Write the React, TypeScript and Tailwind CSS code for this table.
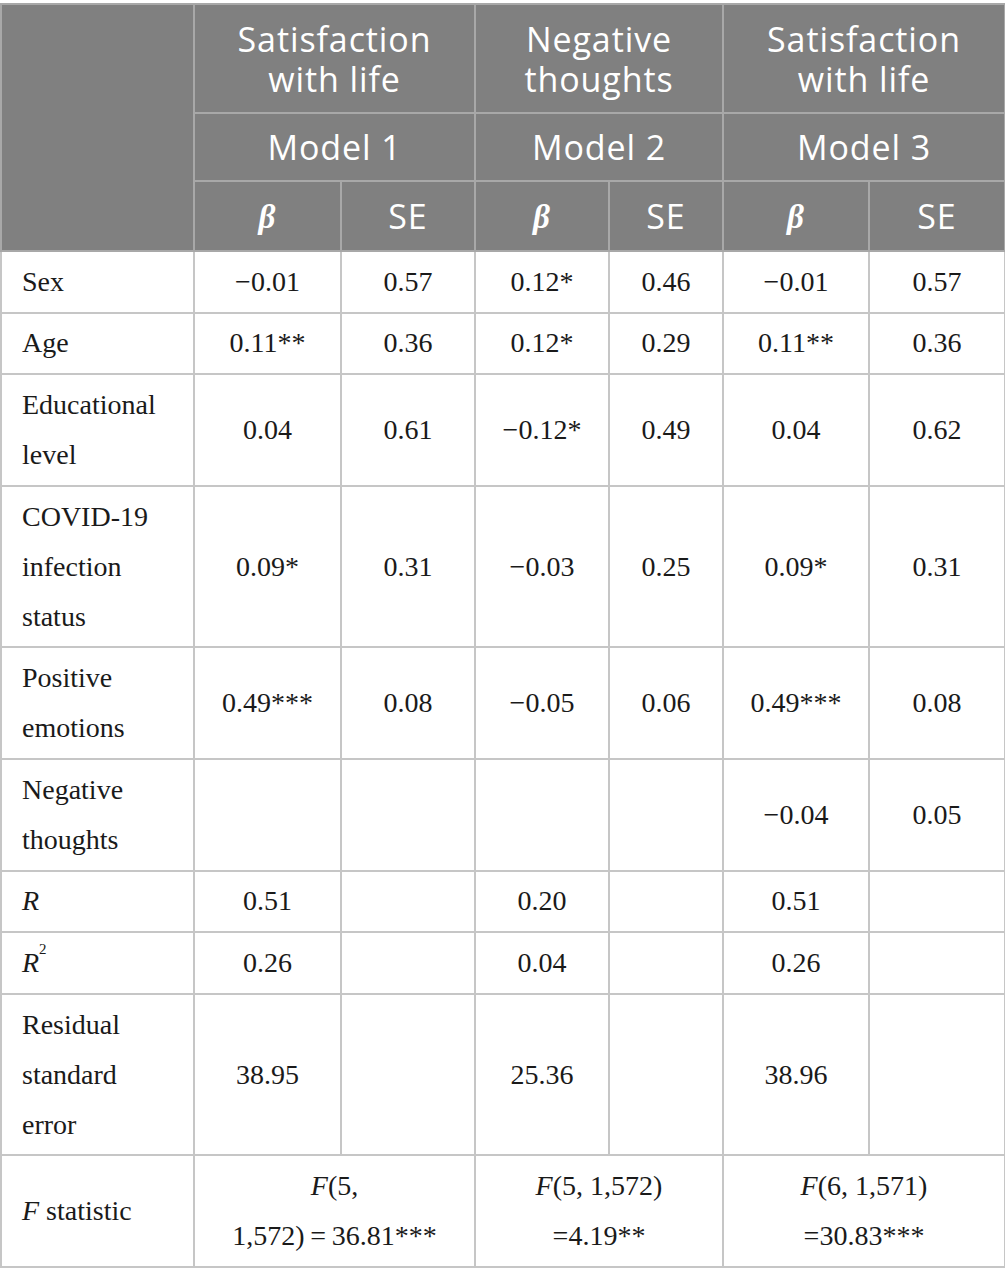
import React from 'react';

const serif = { fontFamily: '"Liberation Serif", "Times New Roman", serif' };

interface BodyRow {
  label: React.ReactNode;
  cells: React.ReactNode[];
}

const rows: BodyRow[] = [
  { label: 'Sex', cells: ['−0.01', '0.57', '0.12*', '0.46', '−0.01', '0.57'] },
  { label: 'Age', cells: ['0.11**', '0.36', '0.12*', '0.29', '0.11**', '0.36'] },
  {
    label: (
      <>
        Educational
        <br />
        level
      </>
    ),
    cells: ['0.04', '0.61', '−0.12*', '0.49', '0.04', '0.62'],
  },
  {
    label: (
      <>
        COVID-19
        <br />
        infection
        <br />
        status
      </>
    ),
    cells: ['0.09*', '0.31', '−0.03', '0.25', '0.09*', '0.31'],
  },
  {
    label: (
      <>
        Positive
        <br />
        emotions
      </>
    ),
    cells: ['0.49***', '0.08', '−0.05', '0.06', '0.49***', '0.08'],
  },
  {
    label: (
      <>
        Negative
        <br />
        thoughts
      </>
    ),
    cells: ['', '', '', '', '−0.04', '0.05'],
  },
  { label: <i>R</i>, cells: ['0.51', '', '0.20', '', '0.51', ''] },
  {
    label: (
      <>
        <i>R</i>
        <sup className="text-[15px] align-[10px]">2</sup>
      </>
    ),
    cells: ['0.26', '', '0.04', '', '0.26', ''],
  },
  {
    label: (
      <>
        Residual
        <br />
        standard
        <br />
        error
      </>
    ),
    cells: ['38.95', '', '25.36', '', '38.96', ''],
  },
];

function HeadCell({ children, colSpan, rowSpan, py = 'py-[13px]' }: { children?: React.ReactNode; colSpan?: number; rowSpan?: number; py?: string }) {
  return (
    <th
      colSpan={colSpan}
      rowSpan={rowSpan}
      className={`border-2 border-[#a8a8a8] bg-[#808080] text-white font-normal text-center ${py} px-2 text-[34px] leading-[40px] tracking-[0.9px]`}
      style={{ fontFamily: '"Open Sans", "Noto Sans", sans-serif' }}
    >
      {children}
    </th>
  );
}

function Beta() {
  return (
    <span className="italic font-bold text-[33px]" style={serif}>
      β
    </span>
  );
}

export default function App() {
  const td = 'border-2 border-[#c6c6c6] text-center py-[4.8px] px-2 text-[28px] leading-[50px] text-[#1a1a1a]';
  const labelTd = 'border-2 border-[#c6c6c6] text-left py-[4.8px] pl-[20px] pr-2 text-[28px] leading-[50px] text-[#1a1a1a]';

  return (
    <div className="w-[1005px] h-[1285px] bg-white pt-[3px]">
      <table className="w-[1004px] table-fixed border-collapse border-2 border-[#c6c6c6]" style={serif}>
        <colgroup>
          <col className="w-[193px]" />
          <col className="w-[147px]" />
          <col className="w-[134px]" />
          <col className="w-[134px]" />
          <col className="w-[114px]" />
          <col className="w-[146px]" />
          <col className="w-[136px]" />
        </colgroup>
        <thead>
          <tr>
            <HeadCell rowSpan={3} />
            <HeadCell colSpan={2} py="py-[13.5px]">
              Satisfaction
              <br />
              with life
            </HeadCell>
            <HeadCell colSpan={2} py="py-[13.5px]">
              Negative
              <br />
              thoughts
            </HeadCell>
            <HeadCell colSpan={2} py="py-[13.5px]">
              Satisfaction
              <br />
              with life
            </HeadCell>
          </tr>
          <tr>
            <HeadCell colSpan={2}>Model 1</HeadCell>
            <HeadCell colSpan={2}>Model 2</HeadCell>
            <HeadCell colSpan={2}>Model 3</HeadCell>
          </tr>
          <tr>
            <HeadCell>
              <Beta />
            </HeadCell>
            <HeadCell>SE</HeadCell>
            <HeadCell>
              <Beta />
            </HeadCell>
            <HeadCell>SE</HeadCell>
            <HeadCell>
              <Beta />
            </HeadCell>
            <HeadCell>SE</HeadCell>
          </tr>
        </thead>
        <tbody>
          {rows.map((row, i) => (
            <tr key={i}>
              <td className={labelTd}>{row.label}</td>
              {row.cells.map((c, j) => (
                <td key={j} className={td}>
                  {c}
                </td>
              ))}
            </tr>
          ))}
          <tr>
            <td className={labelTd}>
              <i>F</i> statistic
            </td>
            <td colSpan={2} className={td}>
              <i>F</i>(5,
              <br />
              1,572)&thinsp;=&thinsp;36.81***
            </td>
            <td colSpan={2} className={td}>
              <i>F</i>(5, 1,572)
              <br />
              =4.19**
            </td>
            <td colSpan={2} className={td}>
              <i>F</i>(6, 1,571)
              <br />
              =30.83***
            </td>
          </tr>
        </tbody>
      </table>
    </div>
  );
}
